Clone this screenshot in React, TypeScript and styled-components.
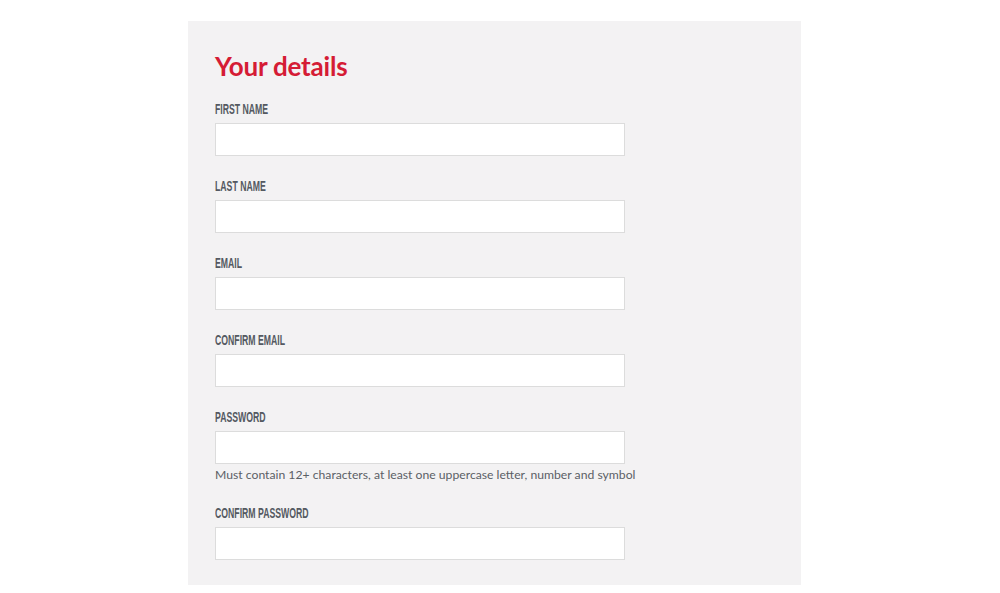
import React from "react";
import styled, { createGlobalStyle } from "styled-components";

const Global = createGlobalStyle`
  html, body { margin: 0; padding: 0; background: #ffffff; }
  body { font-family: "Inter", "Liberation Sans", sans-serif; }
  * { box-sizing: border-box; }
`;

const Page = styled.div`
  padding: 21px 0 8px 188px;
`;

const Panel = styled.section`
  width: 613px;
  background: #f3f2f3;
  padding: 29px 27px 25px;
`;

const Heading = styled.h2`
  margin: 0 0 19px;
  font-family: "Lato", "Liberation Sans", sans-serif;
  font-weight: 700;
  font-size: 26px;
  line-height: 32px;
  color: #d51c35;
  letter-spacing: -0.2px;
`;

const Form = styled.form`
  display: flex;
  flex-direction: column;
  gap: 22px;
`;

const Field = styled.div`
  display: flex;
  flex-direction: column;
  align-items: flex-start;
`;

const Label = styled.label`
  display: block;
  width: max-content;
  font-family: "Liberation Sans", "Arial", sans-serif;
  font-weight: 700;
  font-size: 15px;
  line-height: 16px;
  color: #545961;
  text-transform: uppercase;
  margin-bottom: 6px;
  transform: scaleX(0.58);
  transform-origin: left center;
`;

const Input = styled.input`
  width: 410px;
  height: 33px;
  border: 1px solid #dcdcdc;
  background: #ffffff;
  padding: 0 10px;
  font-size: 14px;
  outline: none;
`;

const Hint = styled.p`
  margin: 3px 0 0;
  font-family: "Lato", "Liberation Sans", sans-serif;
  font-size: 12.2px;
  line-height: 16px;
  color: #5b5f66;
`;

const fields = [
  { id: "first", label: "First name", type: "text" },
  { id: "last", label: "Last name", type: "text" },
  { id: "email", label: "Email", type: "email" },
  { id: "confirmEmail", label: "Confirm email", type: "email" },
  {
    id: "password",
    label: "Password",
    type: "password",
    hint: "Must contain 12+ characters, at least one uppercase letter, number and symbol",
  },
  { id: "confirmPassword", label: "Confirm password", type: "password" },
];

export default function App() {
  return (
    <>
      <Global />
      <Page>
        <Panel>
          <Heading>Your details</Heading>
          <Form onSubmit={(e) => e.preventDefault()}>
            {fields.map((f) => (
              <Field key={f.id}>
                <Label htmlFor={f.id}>{f.label}</Label>
                <Input id={f.id} type={f.type} />
                {f.hint && <Hint>{f.hint}</Hint>}
              </Field>
            ))}
          </Form>
        </Panel>
      </Page>
    </>
  );
}
